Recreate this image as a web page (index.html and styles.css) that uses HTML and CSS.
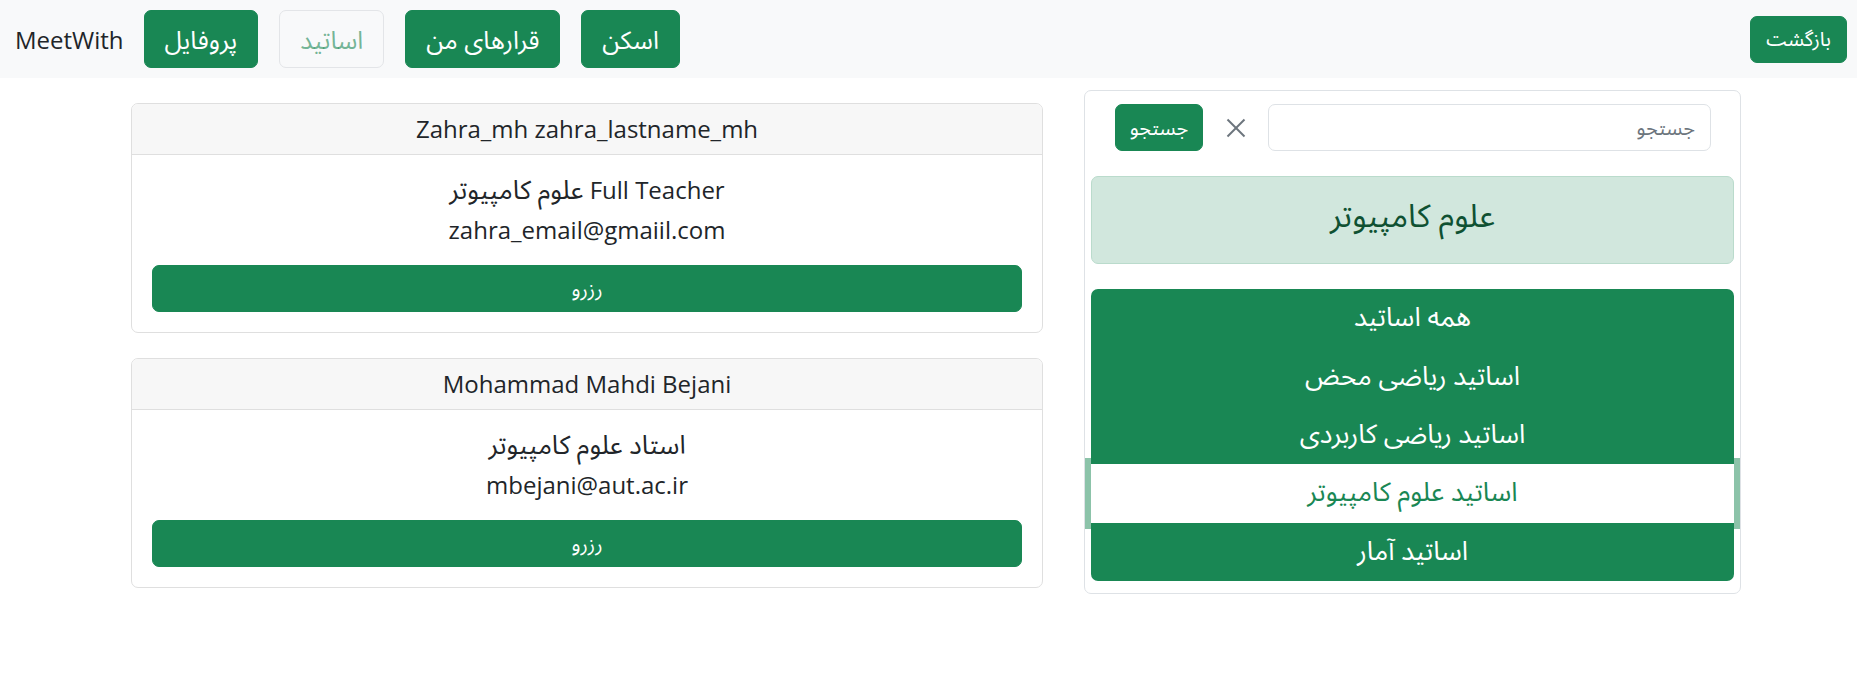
FILE: index.html
```html
<!DOCTYPE html>
<html lang="fa">
<head>
<meta charset="utf-8">
<title>MeetWith</title>
<link rel="stylesheet" href="styles.css">
</head>
<body>
<nav class="navbar">
  <span class="brand">MeetWith</span>
  <div class="nav-actions">
    <button class="btn btn-lg btn-success">پروفایل</button>
    <button class="btn btn-lg btn-disabled" disabled>اساتید</button>
    <button class="btn btn-lg btn-success">قرارهای من</button>
    <button class="btn btn-lg btn-success">اسکن</button>
  </div>
  <button class="btn btn-success btn-back">بازگشت</button>
</nav>

<main class="content">
  <section class="teachers">
    <div class="card">
      <div class="card-header"><h5 class="title">Zahra_mh zahra_lastname_mh</h5></div>
      <div class="card-body">
        <h5 class="line"><span class="fa">علوم کامپیوتر</span> Full Teacher</h5>
        <h5 class="line last">zahra_email@gmaiil.com</h5>
        <button class="btn btn-success btn-block">رزرو</button>
      </div>
    </div>
    <div class="card">
      <div class="card-header"><h5 class="title">Mohammad Mahdi Bejani</h5></div>
      <div class="card-body">
        <h5 class="line" dir="rtl"><span class="fa">استاد علوم کامپیوتر</span></h5>
        <h5 class="line last">mbejani@aut.ac.ir</h5>
        <button class="btn btn-success btn-block">رزرو</button>
      </div>
    </div>
  </section>

  <aside class="panel">
    <form class="search">
      <button type="button" class="btn btn-success btn-search">جستجو</button>
      <span class="clear">
        <svg width="20" height="20" viewBox="0 0 20 20" aria-hidden="true">
          <line x1="1.5" y1="1.5" x2="18.5" y2="18.5" />
          <line x1="18.5" y1="1.5" x2="1.5" y2="18.5" />
        </svg>
      </span>
      <input class="search-input" type="text" dir="rtl" placeholder="جستجو">
    </form>

    <div class="alert"><h4 class="alert-title">علوم کامپیوتر</h4></div>

    <ul class="list">
      <li class="list-item">همه اساتید</li>
      <li class="list-item">اساتید ریاضی محض</li>
      <li class="list-item">اساتید ریاضی کاربردی</li>
      <li class="list-item active">اساتید علوم کامپیوتر</li>
      <li class="list-item">اساتید آمار</li>
    </ul>
  </aside>
</main>
</body>
</html>
```

FILE: styles.css
```css
* {
  box-sizing: border-box;
}

body {
  margin: 0;
  font-family: "Open Sans", "Noto Sans Arabic", "DejaVu Sans", sans-serif;
  font-size: 20px;
  color: #212529;
  background: #ffffff;
}

h4, h5 {
  margin: 0;
  font-weight: 400;
  line-height: 1.2;
}

/* ---------- buttons ---------- */
.btn {
  font-family: inherit;
  font-size: 20px;
  line-height: 30px;
  height: 47px;
  padding: 0 15px;
  border: 1px solid transparent;
  border-radius: 7px;
  cursor: pointer;
}

.btn-lg {
  font-size: 25px;
  height: 58px;
  padding: 0 20px;
}

.btn-success {
  background: #198754;
  border-color: #198754;
  color: #ffffff;
}

.btn-disabled {
  background: transparent;
  border-color: #e3e5e8;
  color: rgba(25, 135, 84, 0.6);
}

/* ---------- navbar ---------- */
.navbar {
  height: 78px;
  background: #f8f9fa;
  display: flex;
  align-items: center;
  padding: 0 10px 0 15px;
}

.brand {
  font-size: 24px;
  color: #212529;
  margin-right: 20px;
}

.nav-actions {
  display: flex;
  gap: 21px;
}

.btn-back {
  margin-left: auto;
}

/* ---------- content ---------- */
.content {
  display: flex;
  align-items: flex-start;
  gap: 41px;
  padding-left: 131px;
}

.teachers {
  width: 912px;
  margin-top: 25px;
  display: flex;
  flex-direction: column;
  gap: 25px;
}

.card {
  border: 1px solid #dfdfdf;
  border-radius: 7px;
  overflow: hidden;
  text-align: center;
}

.card-header {
  background: #f7f7f7;
  border-bottom: 1px solid #dfdfdf;
  padding: 10px 20px;
}

.title,
.line {
  font-size: 24px;
  line-height: 30px;
}

.fa {
  font-size: 26px;
  line-height: 1;
}

.card-body {
  padding: 20px;
}

.line {
  margin-bottom: 10px;
}

.line.last {
  margin-bottom: 20px;
}

.btn-block {
  display: block;
  width: 100%;
}

/* ---------- side panel ---------- */
.panel {
  width: 657px;
  margin-top: 12px;
  border: 1px solid #dee2e6;
  border-radius: 7px;
  padding: 13px 6px 12px 6px;
}

.search {
  display: flex;
  align-items: center;
  margin: 0;
  padding: 0 23px 0 24px;
}

.btn-search {
  width: 88px;
  padding: 0;
}

.clear {
  display: flex;
  margin: 0 22px 0 23px;
}

.clear svg line {
  stroke: #6c757d;
  stroke-width: 2;
}

.search-input {
  flex: 1;
  height: 47px;
  border: 1px solid #dee2e6;
  border-radius: 7px;
  padding: 0 15px;
  font-family: inherit;
  font-size: 20px;
  color: #212529;
  background: #ffffff;
}

.search-input::placeholder {
  color: #6c757d;
}

.alert {
  margin-top: 25px;
  background: #d1e7dd;
  border: 1px solid #badbcc;
  border-radius: 7px;
  padding: 20px 20px 30px;
  text-align: center;
  color: #0f5132;
}

.alert-title {
  font-size: 32px;
  line-height: 36px;
}

.list {
  list-style: none;
  margin: 25px 0 0;
  padding: 0;
}

.list-item {
  height: 58.4px;
  display: flex;
  align-items: center;
  justify-content: center;
  font-size: 26.5px;
  background: #198754;
  color: #ffffff;
}

.list-item:first-child {
  border-radius: 7px 7px 0 0;
}

.list-item:last-child {
  border-radius: 0 0 7px 7px;
}

.list-item.active {
  position: relative;
  z-index: 1;
  background: #ffffff;
  color: #198754;
  box-shadow: 0 0 0 6px rgba(25, 135, 84, 0.5);
}
```
